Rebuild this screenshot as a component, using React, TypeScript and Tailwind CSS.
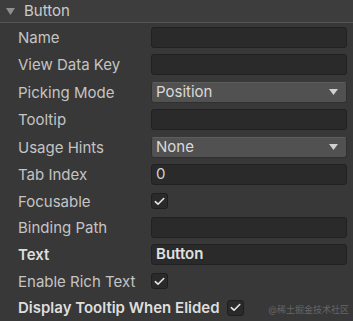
import React from "react";

const font = { fontFamily: "Inter, 'Noto Sans', 'Noto Sans CJK SC', sans-serif" };

function Field({ value, bold }: { value?: string; bold?: boolean }) {
  return (
    <div className={`h-[21px] flex-1 rounded-[3px] border border-[#212121] bg-[#2a2a2a] px-[4px] flex items-center text-[15px] ${bold ? "font-semibold text-[#e0e0e0]" : "text-[#d2d2d2]"}`}>
      {value}
    </div>
  );
}

function Select({ value }: { value: string }) {
  return (
    <div className="h-[21px] flex-1 rounded-[3px] border border-[#303030] border-t-[#5c5c5c] bg-[#515151] pl-[4px] pr-[8px] flex items-center justify-between text-[15px] text-[#dadada]">
      <span>{value}</span>
      <svg width="9" height="6" viewBox="0 0 9 6"><path d="M0 0H9L4.5 6Z" fill="#d0d0d0" /></svg>
    </div>
  );
}

function Check() {
  return (
    <div className="h-[16px] w-[17px] rounded-[3px] border border-[#1e1e1e] bg-[#2a2a2a] flex items-center justify-center">
      <svg width="11" height="9" viewBox="0 0 11 9"><path d="M1.3 4.7 4 7.2 9.7 1.5" stroke="#e8e8e8" strokeWidth="1.6" fill="none" strokeLinecap="round" strokeLinejoin="round" /></svg>
    </div>
  );
}

function Row({ label, bold, h, children }: { label: string; bold?: boolean; h: string; children: React.ReactNode }) {
  return (
    <div className={`${h} flex items-center pl-[18px] pr-[6px]`}>
      <div className={`w-[133px] shrink-0 pt-[2px] text-[15px] whitespace-nowrap ${bold ? "font-semibold text-[#dedede]" : "text-[#c4c4c4]"}`}>{label}</div>
      {children}
    </div>
  );
}

export default function App() {
  return (
    <div className="relative w-[353px] h-[321px] bg-[#383838] overflow-hidden" style={font}>
      <div className="h-[23px] bg-[#3d3d3d] border-b border-[#555555] flex items-center pl-[6px] gap-[9px]">
        <svg width="9" height="7" viewBox="0 0 9 7"><path d="M0 0H9L4.5 7Z" fill="#8f8f8f" /></svg>
        <span className="text-[15px] text-[#cbcbcb]">Button</span>
      </div>
      <div className="pt-[1px]">
        <Row label="Name" h="h-[27px]"><Field /></Row>
        <Row label="View Data Key" h="h-[27px]"><Field /></Row>
        <Row label="Picking Mode" h="h-[28px]"><Select value="Position" /></Row>
        <Row label="Tooltip" h="h-[27px]"><Field /></Row>
        <Row label="Usage Hints" h="h-[28px]"><Select value="None" /></Row>
        <Row label="Tab Index" h="h-[27px]"><Field value="0" /></Row>
        <Row label="Focusable" h="h-[26px]"><Check /></Row>
        <Row label="Binding Path" h="h-[27px]"><Field /></Row>
        <Row label="Text" bold h="h-[27px]"><Field value="Button" bold /></Row>
        <Row label="Enable Rich Text" h="h-[26px]"><Check /></Row>
        <div className="h-[27px] flex items-center pl-[18px] gap-[7px]">
          <span className="pt-[2px] text-[15px] font-semibold text-[#dedede] whitespace-nowrap">Display Tooltip When Elided</span>
          <Check />
        </div>
      </div>
      <div className="absolute right-[4px] bottom-[5px] text-[9px] text-[#666666]">@稀土掘金技术社区</div>
    </div>
  );
}
